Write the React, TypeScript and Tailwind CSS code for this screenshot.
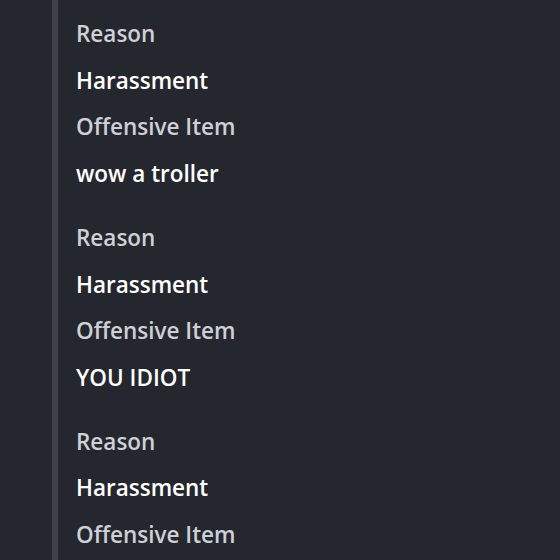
const groups = [
  { reason: "Harassment", item: "wow a troller" },
  { reason: "Harassment", item: "YOU IDIOT" },
  { reason: "Harassment", item: "" },
]

export default function App() {
  return (
    <div className="h-[560px] w-[560px] overflow-hidden bg-[#25272e] pl-[52px]" style={{ fontFamily: '"Open Sans", sans-serif' }}>
      <div className="flex h-full flex-col gap-[17px] border-l-[6px] border-[#3f424a] pl-[18px] pt-[11px]">
        {groups.map((g, i) => (
          <div key={i} className="flex flex-col text-[22.5px] font-semibold leading-[46.7px]">
            <div className="text-[#cdd0d7]">Reason</div>
            <div className="text-white">{g.reason}</div>
            <div className="text-[#cdd0d7]">Offensive Item</div>
            {g.item && <div className="text-white">{g.item}</div>}
          </div>
        ))}
      </div>
    </div>
  )
}
